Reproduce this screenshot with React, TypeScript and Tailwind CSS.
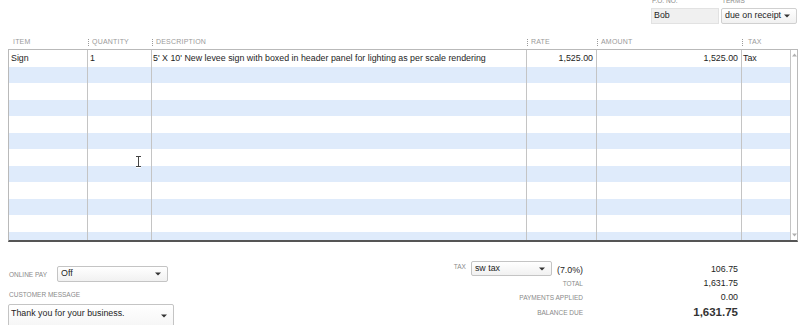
import React from "react";

const Arrow = ({ className = "" }: { className?: string }) => (
  <svg width="6" height="4" viewBox="0 0 6 4" className={className}>
    <path d="M0 0.5 H6 L3 3.5 Z" fill="#333" />
  </svg>
);

const Sel = ({ text, className }: { text: string; className: string }) => (
  <div
    className={
      "flex items-center justify-between border border-[#c4c4c4] rounded-[2px] bg-gradient-to-b from-white to-[#f1f1f1] pl-[3px] pr-[6px] " +
      className
    }
  >
    <span>{text}</span>
    <Arrow />
  </div>
);

const Sep = () => (
  <span className="inline-block h-[7px] w-0 border-l border-dotted border-[#9a9a9a] mr-[3px]" />
);

const cols = "grid grid-cols-[79px_64px_375px_70px_145px_48px]";

export default function App() {
  const rows = Array.from({ length: 12 }, (_, i) => i);
  return (
    <div className="relative w-[800px] h-[325px] overflow-hidden bg-white font-['Liberation_Sans',Arial,sans-serif] text-[8.85px] text-[#1e1e1e]">
      {/* top PO / terms */}
      <div className="flex justify-end gap-[2px] pr-[3px] h-[39px] -mt-[3px]">
        <div className="flex flex-col w-[68px]">
          <span className="text-[6.5px] text-[#8a8a8a] h-[11px] pl-[1px] leading-[8px]">P.O. NO.</span>
          <div className="h-[16px] bg-[#f0f0f0] border border-[#e2e2e2] pl-[2px] flex items-center">Bob</div>
        </div>
        <div className="flex flex-col w-[76px]">
          <span className="text-[6.5px] text-[#8a8a8a] h-[11px] pl-[1px] leading-[8px]">TERMS</span>
          <Sel text="due on receipt" className="h-[16px] border-[#d0d0d0]" />
        </div>
      </div>

      {/* header labels */}
      <div className="ml-[9px] h-[13px] flex">
        <div className={cols + " text-[7px] text-[#9a9a9a] tracking-[0.2px] items-center"}>
          <div className="pl-[4px]">ITEM</div>
          <div className="flex items-center"><Sep />QUANTITY</div>
          <div className="flex items-center"><Sep />DESCRIPTION</div>
          <div className="flex items-center"><Sep />RATE</div>
          <div className="flex items-center"><Sep />AMOUNT</div>
          <div className="flex items-center"><Sep /><span className="ml-[2px]">TAX</span></div>
        </div>
      </div>

      {/* table */}
      <div className="ml-[8px] w-[790px] border border-[#b9b9b9] border-b-2 border-b-[#555] flex">
        <div className="h-[190px] overflow-hidden flex flex-col">
          {rows.map((i) => (
            <div
              key={i}
              className={
                cols +
                " shrink-0 " +
                (i % 2 === 0 ? "h-[17px] bg-white" : "h-[16px] bg-[#dfebfb]")
              }
            >
              <div className="border-r border-[#c4c4c4] pl-[2px] flex items-center">{i === 0 ? "Sign" : ""}</div>
              <div className="border-r border-[#c4c4c4] pl-[2px] flex items-center">{i === 0 ? "1" : ""}</div>
              <div className="border-r border-[#c4c4c4] pl-[1px] flex items-center whitespace-nowrap">
                {i === 0 ? "5' X 10' New levee sign with boxed in header panel for lighting as per scale rendering" : ""}
              </div>
              <div className="border-r border-[#c4c4c4] pr-[3px] flex items-center justify-end">{i === 0 ? "1,525.00" : ""}</div>
              <div className="border-r border-[#c4c4c4] pr-[3px] flex items-center justify-end">{i === 0 ? "1,525.00" : ""}</div>
              <div className="pl-[1px] flex items-center">{i === 0 ? "Tax" : ""}</div>
            </div>
          ))}
        </div>
        <div className="w-[7px] border-l border-[#c4c4c4] bg-white flex flex-col justify-between items-center py-[3px]">
          <svg width="5" height="4" viewBox="0 0 5 4"><path d="M0 3.5 H5 L2.5 0.5 Z" fill="#b0b0b0" /></svg>
          <svg width="5" height="4" viewBox="0 0 5 4"><path d="M0 0.5 H5 L2.5 3.5 Z" fill="#b0b0b0" /></svg>
        </div>
      </div>

      {/* bottom */}
      <div className="flex">
        <div className="w-[440px] pl-[9px]">
          <div className="mt-[24px] flex items-center h-[16px]">
            <span className="text-[6.5px] text-[#8a8a8a] w-[48px] mt-[2px]">ONLINE PAY</span>
            <Sel text="Off" className="ml-[0px] w-[111px] h-[16px]" />
          </div>
          <div className="mt-[8px] text-[6.5px] text-[#8a8a8a] h-[10px] leading-[10px]">CUSTOMER MESSAGE</div>
          <div className="-ml-[1px] mt-[4px] w-[166px] h-[30px] border border-[#c4c4c4] rounded-[2px] bg-gradient-to-b from-white to-[#f3f3f3] pl-[2px] pr-[6px] pt-[2px] flex justify-between">
            <span>Thank you for your business.</span>
            <Arrow className="mt-[7px]" />
          </div>
        </div>
        <div className="mt-[19px] grid grid-cols-[143px_155px] auto-rows-min text-right">
          <div className="flex items-start justify-end h-[16px]">
            <span className="text-[6.5px] text-[#8a8a8a] mt-[1px] mr-[5px]">TAX</span>
            <Sel text="sw tax" className="w-[81px] h-[15px] text-left" />
            <span className="ml-[5px] mt-[3px]">(7.0%)</span>
          </div>
          <div className="pt-[2px]">106.75</div>
          <div className="h-[14px] flex items-center justify-end text-[6.5px] text-[#8a8a8a]">TOTAL</div>
          <div className="h-[14px] flex items-center justify-end">1,631.75</div>
          <div className="h-[14px] flex items-center justify-end text-[6.5px] text-[#8a8a8a]">PAYMENTS APPLIED</div>
          <div className="h-[14px] flex items-center justify-end">0.00</div>
          <div className="h-[15px] flex items-center justify-end text-[6.5px] text-[#8a8a8a]">BALANCE DUE</div>
          <div className="h-[15px] flex items-center justify-end text-[11.5px] font-bold text-[#333]">1,631.75</div>
        </div>
      </div>

      {/* mouse I-beam cursor */}
      <svg className="absolute left-[135px] top-[155px]" width="7" height="13" viewBox="0 0 7 13">
        <path d="M1 1 H3 V12 H1 M4 1 H6 M4 12 H6 M3.5 1 V12" stroke="#fff" strokeWidth="2" fill="none" />
        <path d="M1 1.5 H6 M1 11.5 H6 M3.5 1.5 V11.5" stroke="#444" strokeWidth="1" fill="none" />
      </svg>
    </div>
  );
}
